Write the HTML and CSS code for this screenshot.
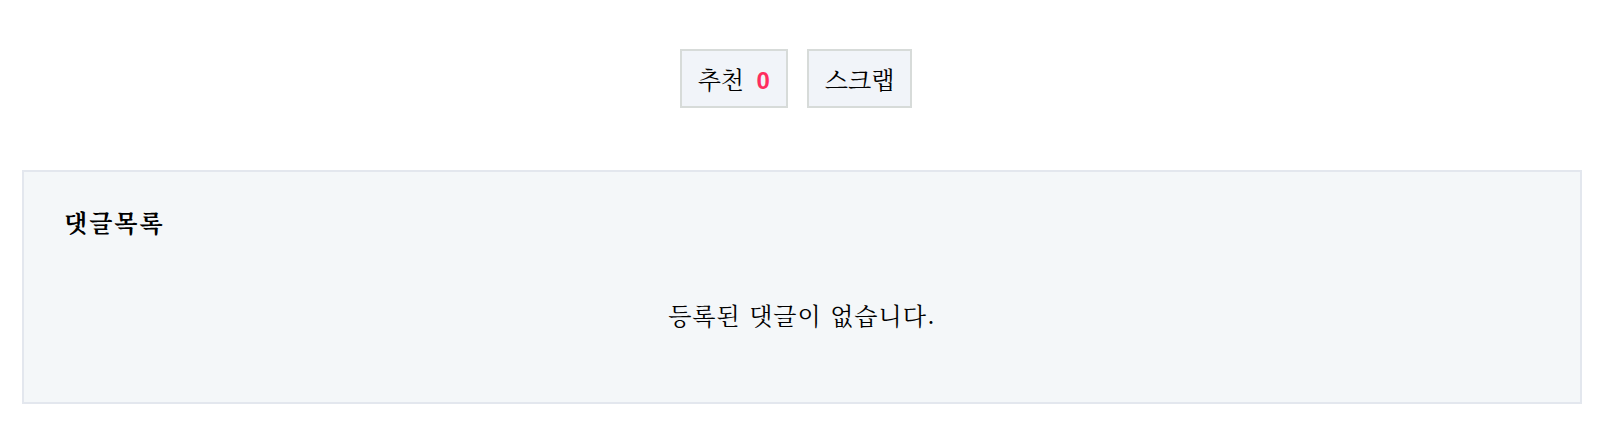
FILE: index.html
```html
<!DOCTYPE html>
<html lang="ko">
<head>
  <meta charset="UTF-8" />
  <title>게시글</title>
  <link rel="stylesheet" href="styles.css">
</head>
<body>

  <div class="post-actions">
    <button class="action-btn">추천 <span class="count">0</span></button>
    <button class="action-btn">스크랩</button>
  </div>

  <div class="comment-box">
    <h3 class="comment-title">댓글목록</h3>
    <p class="comment-empty">등록된 댓글이 없습니다.</p>
  </div>

</body>
</html>
```

FILE: styles.css
```css
* { box-sizing: border-box; margin: 0; padding: 0; }
body {
  font-family: 'Noto Serif CJK KR', 'Liberation Serif', serif;
  color: #000;
  background: #fff;
  padding: 49px 24px 0 22px;
}

.post-actions {
  display: flex;
  justify-content: center;
  gap: 19px;
  padding-right: 12px;
}

.action-btn {
  font-family: inherit;
  font-size: 24px;
  color: #000;
  height: 59px;
  padding: 0 16px;
  background: #f1f4f9;
  border: 2px solid #d7dbd9;
  cursor: pointer;
}

.count {
  font-family: 'Liberation Sans', sans-serif;
  color: #ff2d5f;
  font-weight: bold;
  margin-left: 5px;
}

.comment-box {
  margin-top: 62px;
  height: 234px;
  background: #f4f7f9;
  border: 2px solid #e3e7ee;
  padding: 32px 40px;
}

.comment-title {
  font-size: 24px;
  font-weight: bold;
  letter-spacing: 2px;
}

.comment-empty {
  margin-top: 58px;
  text-align: center;
  font-size: 24px;
  letter-spacing: 1px;
}
```
